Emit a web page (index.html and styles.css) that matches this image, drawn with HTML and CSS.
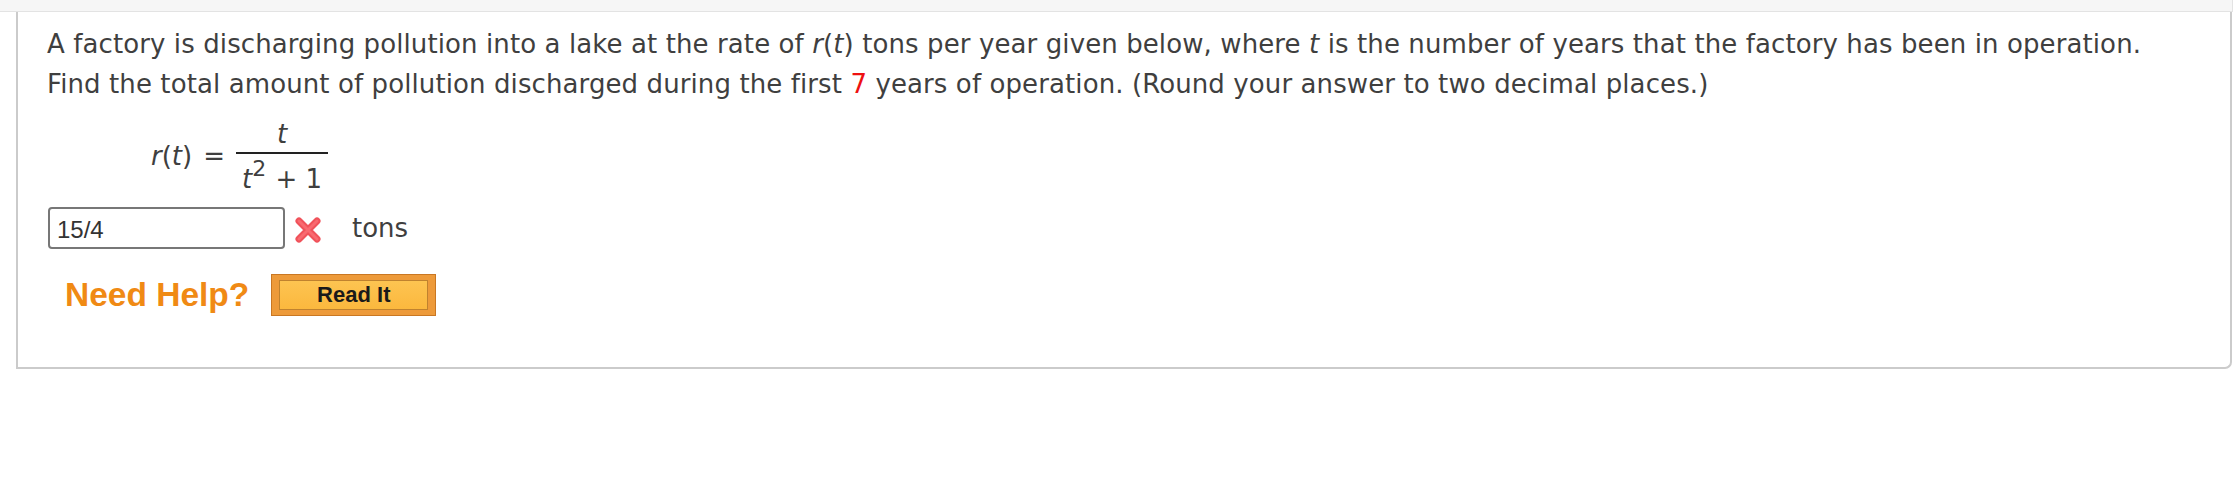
FILE: index.html
```html
<!DOCTYPE html>
<html>
<head>
<meta charset="utf-8">
<link rel="stylesheet" href="styles.css">
</head>
<body>
<div class="topbar"></div>
<div class="question">
  <p class="prompt">A factory is discharging pollution into a lake at the rate of <i>r</i>(<i>t</i>) tons per year given below, where <i>t</i> is the number of years that the factory has been in operation.<br>Find the total amount of pollution discharged during the first <span class="red">7</span> years of operation. (Round your answer to two decimal places.)</p>
  <div class="formula">
    <span class="lhs"><i>r</i>(<i>t</i>)</span>
    <span class="eq">=</span>
    <span class="frac">
      <span class="num"><i>t</i></span>
      <span class="den"><i>t</i><sup>2</sup> + 1</span>
    </span>
  </div>
  <div class="answer">
    <div class="input">15/4</div>
    <svg class="xmark" width="28" height="28" viewBox="0 0 28 28">
      <path d="M5 5 L23 23 M23 5 L5 23" stroke="#f0525a" stroke-width="7" stroke-linecap="round"/>
      <path d="M5 5 L23 23 M23 5 L5 23" stroke="#ff7a80" stroke-width="3" stroke-linecap="round" opacity="0.6"/>
    </svg>
    <span class="unit">tons</span>
  </div>
  <div class="help">
    <span class="need">Need Help?</span>
    <span class="btn"><span class="btn-inner">Read It</span></span>
  </div>
</div>
</body>
</html>
```
FILE: styles.css
```css
html, body {
  margin: 0;
  padding: 0;
  background: #fff;
}
body {
  width: 2236px;
  font-family: "DejaVu Sans", Verdana, sans-serif;
  color: #3f3f3f;
}
.topbar {
  width: 2232px;
  height: 11px;
  background: #f6f6f6;
  border-bottom: 1px solid #e3e3e3;
  border-right: 1px solid #e3e3e3;
}
.question {
  margin-left: 16px;
  width: 2183px;
  height: 355px;
  border: 2px solid #cbcbcb;
  border-top: none;
  border-bottom-right-radius: 7px;
  padding: 0 0 0 29px;
}
.prompt {
  margin: 0;
  padding-top: 12px;
  font-size: 26px;
  letter-spacing: 0.1px;
  line-height: 40px;
  white-space: nowrap;
}
.red {
  color: #ee1111;
}
.formula {
  display: flex;
  align-items: flex-start;
  margin-top: 10px;
  padding-left: 104px;
  font-size: 26px;
  height: 80px;
}
.lhs {
  line-height: 30px;
  margin-top: 27px;
}
.eq {
  line-height: 30px;
  margin: 27px 11px 0 11px;
}
.frac {
  display: flex;
  flex-direction: column;
  align-items: center;
  width: 92px;
  margin-top: 5px;
}
.num {
  line-height: 30px;
  border-bottom: 2px solid #222;
  width: 100%;
  text-align: center;
  padding-bottom: 3px;
}
.den {
  line-height: 36px;
  padding-top: 7px;
}
.den sup {
  font-size: 22px;
  vertical-align: 12px;
  line-height: 0;
  margin-right: 1px;
}
.answer {
  display: flex;
  align-items: center;
  margin-top: 13px;
  margin-left: 1px;
  height: 42px;
}
.input {
  box-sizing: border-box;
  width: 237px;
  height: 42px;
  border: 2px solid #777;
  border-radius: 4px;
  font-family: "Liberation Sans", Arial, sans-serif;
  font-size: 24px;
  color: #333;
  padding: 7px 0 0 7px;
}
.xmark {
  margin-left: 9px;
  margin-top: 3px;
}
.unit {
  margin-left: 30px;
  font-size: 26px;
}
.help {
  display: flex;
  align-items: center;
  margin-top: 25px;
  margin-left: 18px;
}
.need {
  font-family: "Liberation Sans", Arial, sans-serif;
  font-weight: bold;
  font-size: 33.5px;
  color: #f08a14;
}
.btn {
  margin-left: 22px;
  box-sizing: border-box;
  width: 165px;
  height: 42px;
  background: #ed9a3a;
  border: 1px solid #c97723;
  padding: 5px 7px;
  display: flex;
}
.btn-inner {
  flex: 1;
  background: linear-gradient(#fdc451, #fbb83e);
  border: 1px solid #c0822e;
  font-family: "Liberation Sans", Arial, sans-serif;
  font-weight: bold;
  font-size: 22px;
  color: #1a1a1a;
  text-align: center;
  line-height: 27px;
}
```
